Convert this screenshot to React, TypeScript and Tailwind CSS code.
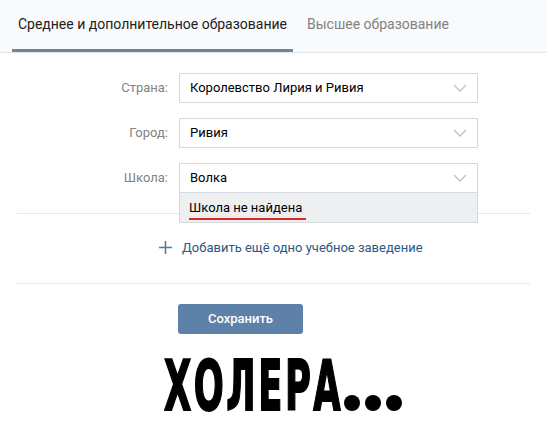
import React from "react";

function Chevron() {
  return (
    <svg width="14" height="8" viewBox="0 0 14 8" className="shrink-0">
      <path d="M1 1l6 6 6-6" fill="none" stroke="#b9c3cd" strokeWidth="1.3" />
    </svg>
  );
}

function Field({ label, value, open }: { label: string; value: string; open?: boolean }) {
  return (
    <div className="flex items-start">
      <div className="w-[168px] text-right text-[13px] leading-[29px] text-[#828282]">{label}</div>
      <div className="relative ml-[11px] w-[299px]">
        <div className="flex h-[30px] items-center justify-between border border-[#d3d9de] bg-white pl-[10px] pr-[10px]">
          <span className="text-[13px] text-black">{value}</span>
          <Chevron />
        </div>
        {open && (
          <div className="absolute left-0 top-[29px] z-10 flex h-[31px] w-full items-center border border-[#d3d9de] bg-[#eeeff1] pl-[9px]">
            <span className="relative text-[13px] text-black">
              Школа не найдена
              <span className="absolute bottom-[-3px] left-0 right-[-4px] h-[2px] bg-[#e3261d]" />
            </span>
          </div>
        )}
      </div>
    </div>
  );
}

export default function App() {
  return (
    <div className="h-[433px] w-[547px] overflow-hidden bg-white font-['Roboto',sans-serif]">
      <div className="flex h-[53px] items-end border-b border-[#e2e5e9] bg-[#f9fafb] pl-[12px]">
        <div className="flex h-[53px] w-[281px] items-center justify-center border-b-[3px] border-[#6e8791] text-[14px] text-[#222]">
          Среднее и дополнительное образование
        </div>
        <div className="flex h-[53px] items-center pl-[14px] pb-[3px] text-[14px] text-[#828282]">Высшее образование</div>
      </div>
      <div className="flex flex-col gap-[15px] pt-[20px]">
        <Field label="Страна:" value="Королевство Лирия и Ривия" />
        <Field label="Город:" value="Ривия" />
        <Field label="Школа:" value="Волка" open />
      </div>
      <div className="mx-[17px] mt-[20px] border-t border-[#e7e8ec]" />
      <div className="flex h-[69px] items-center pl-[158px] pb-[2px]">
        <svg width="15" height="15" viewBox="0 0 15 15">
          <path d="M7.5 1v13M1 7.5h13" stroke="#5b7a99" strokeWidth="1.6" />
        </svg>
        <span className="ml-[9px] text-[13px] text-[#2a5885]">Добавить ещё одно учебное заведение</span>
      </div>
      <div className="mx-[17px] border-t border-[#e7e8ec]" />
      <div className="pl-[178px] pt-[20px]">
        <div className="flex h-[30px] w-[125px] items-center justify-center rounded-[3px] bg-[#5d81a8] text-[13px] font-medium text-white">
          Сохранить
        </div>
      </div>
      <div className="flex items-end pl-[164px] pt-[26px]">
        <div className="h-[52px] w-[180px]">
          <div className="inline-block origin-left scale-x-[0.505] whitespace-nowrap font-['DejaVu_Sans',sans-serif] text-[70px] font-bold leading-[52px] tracking-[5px] text-black [-webkit-text-stroke:2px_black]">
            ХОЛЕРА
          </div>
        </div>
        <div className="flex items-end gap-[5px] pb-[1px]">
          <div className="h-[16px] w-[16px] rounded-full bg-black" />
          <div className="h-[16px] w-[16px] rounded-full bg-black" />
          <div className="h-[16px] w-[16px] rounded-full bg-black" />
        </div>
      </div>
    </div>
  );
}
